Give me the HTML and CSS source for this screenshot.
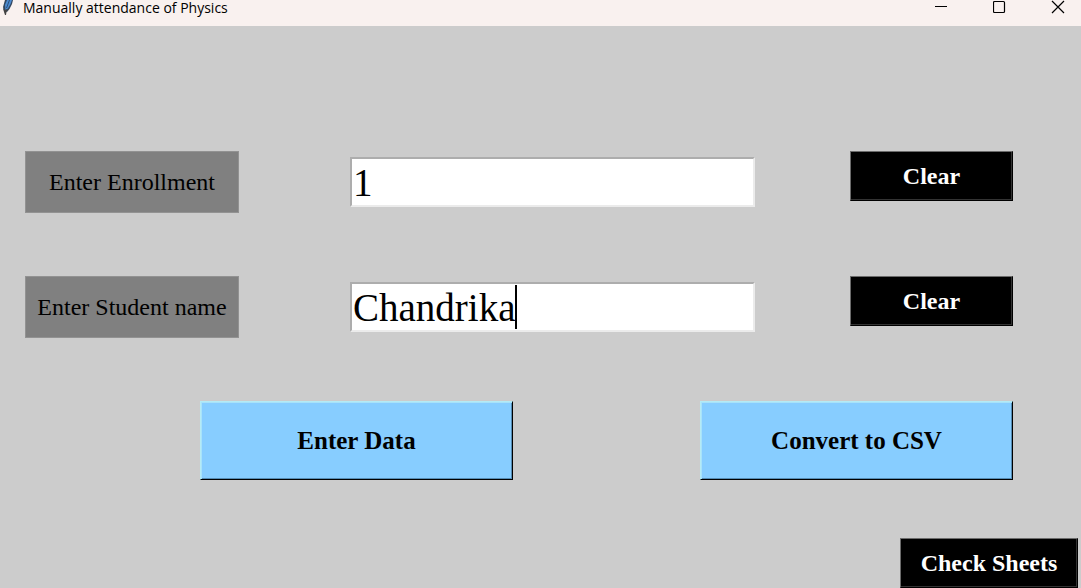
FILE: index.html
```html
<!DOCTYPE html>
<html lang="en">
<head>
<meta charset="utf-8">
<title>Manually attendance of Physics</title>
<link rel="stylesheet" href="styles.css">
</head>
<body>
<div class="window">
  <header class="titlebar">
    <svg class="feather" width="16" height="16" viewBox="0 0 16 16" aria-hidden="true">
      <path d="M5 0 L13 0 L12 4 L9.500 9 L7 12 L4 11 L3 7 Z" fill="#34475f"/>
      <path d="M7 0 L12 0 L10.500 4 L8 8.500 L5.500 10 L5 5 Z" fill="#4d8bd0"/>
      <path d="M9.500 0 L6.500 8" fill="none" stroke="#2c4d78" stroke-width="1"/>
      <path d="M3 8 L5 10 L8 9 L6.500 12 L6 15 L5 15 L4 12 Z" fill="#444"/>
    </svg>
    <h1 class="title">Manually attendance of Physics</h1>
    <div class="controls">
      <button class="control" type="button" aria-label="Minimize">
        <svg width="14" height="14" viewBox="0 0 14 14"><path d="M0 6.500H12" stroke="#000"/></svg>
      </button>
      <button class="control" type="button" aria-label="Maximize">
        <svg width="14" height="14" viewBox="0 0 14 14"><rect x="0.500" y="1.500" width="11" height="11" rx="1" fill="none" stroke="#000" stroke-width="1.200"/></svg>
      </button>
      <button class="control" type="button" aria-label="Close">
        <svg width="14" height="14" viewBox="0 0 14 14"><path d="M1 1L13 13M13 1L1 13" stroke="#000" stroke-width="1.200"/></svg>
      </button>
    </div>
  </header>
  <main class="content">
    <form class="fields">
      <div class="row">
        <label class="label" for="enrollment">Enter Enrollment</label>
        <div class="entry"><input class="input" id="enrollment" type="text" value="1"></div>
        <button class="button dark" type="button">Clear</button>
      </div>
      <div class="row">
        <label class="label" for="student">Enter Student name</label>
        <div class="entry"><input class="input" id="student" type="text" value="Chandrika"><span class="caret"></span></div>
        <button class="button dark" type="button">Clear</button>
      </div>
      <div class="actions">
        <button class="button blue" type="button">Enter Data</button>
        <button class="button blue" type="button">Convert to CSV</button>
      </div>
    </form>
    <footer class="footer">
      <button class="button dark sheets" type="button">Check Sheets</button>
    </footer>
  </main>
</div>
</body>
</html>
```

FILE: styles.css
```css
* {
  box-sizing: border-box;
}

body {
  margin: 0;
  background: #ccc;
  color: #000;
  font-family: "Liberation Serif", "Times New Roman", serif;
}

.window {
  display: flex;
  flex-direction: column;
  min-height: 100vh;
}

.titlebar {
  display: flex;
  align-items: flex-start;
  height: 26px;
  background: #f9f1ef;
}

.title {
  flex: 1;
  margin: 0 0 0 7px;
  font: 400 14px/15px "Open Sans", "Noto Sans", sans-serif;
}

.controls {
  display: flex;
  gap: 44px;
  padding-right: 16px;
}

.control {
  width: 14px;
  height: 14px;
  padding: 0;
  border: 0;
  background: none;
}

.control svg {
  display: block;
}

.content {
  display: flex;
  flex: 1;
  flex-direction: column;
  justify-content: space-between;
  padding-top: 125px;
}

.fields {
  display: flex;
  flex-direction: column;
  gap: 63px;
  padding: 0 68px 0 25px;
}

.row {
  display: grid;
  grid-template-columns: 214px 1fr 163px;
  align-items: start;
}

.label {
  height: 62px;
  border: 1px solid #929292;
  background: #808080;
  font-size: 24px;
  line-height: 60px;
  text-align: center;
  white-space: nowrap;
}

.entry {
  position: relative;
  margin: 6px 95px 0 111px;
}

.input {
  display: block;
  width: 100%;
  height: 50px;
  padding: 0 1px;
  border: 2px solid;
  border-color: #adadad #ebebeb #ebebeb #adadad;
  border-radius: 0;
  outline: 0;
  background: #fff;
  font: 39px "Liberation Serif", "Times New Roman", serif;
}

.caret {
  position: absolute;
  top: 3px;
  left: 165px;
  width: 2px;
  height: 44px;
  background: #000;
}

.button {
  height: 50px;
  padding: 0;
  border: 1px solid;
  border-radius: 0;
  font: bold 24px "Liberation Serif", "Times New Roman", serif;
  white-space: nowrap;
}

.dark {
  border-color: #6b6b6b #000 #000 #6b6b6b;
  background: #000;
  box-shadow: inset -1px -1px #333;
  color: #fff;
}

.blue {
  height: 79px;
  border-color: #b4ebf5 #000 #000 #b4ebf5;
  background: #87cdff;
  box-shadow: inset 1px 1px #a8e2fa, inset -1px -1px #548cb5;
  font-size: 25px;
}

.actions {
  display: grid;
  grid-template-columns: 1fr 1fr;
  gap: 187px;
  padding-left: 175px;
}

.footer {
  display: flex;
  justify-content: flex-end;
  padding-right: 3px;
}

.sheets {
  width: 178px;
}
```
